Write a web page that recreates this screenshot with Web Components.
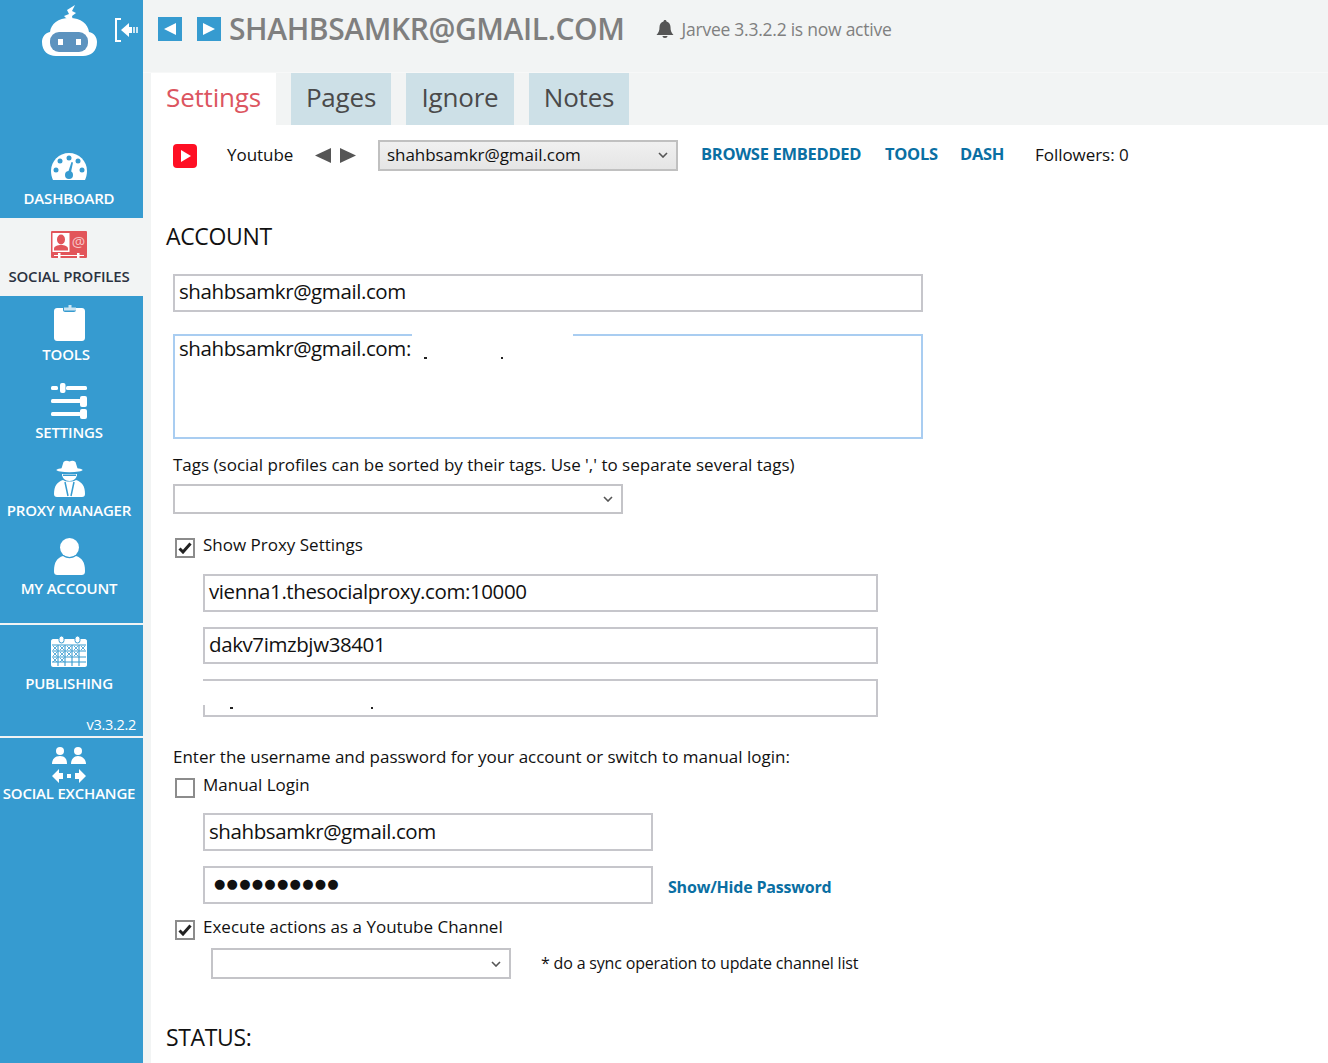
<!DOCTYPE html>
<html>
<head>
<meta charset="utf-8">
<title>Jarvee</title>
<style>
    html, body { margin: 0; height: 100%; overflow: hidden; }
    body { font-family: "Open Sans", "Liberation Sans", sans-serif; background: #f2f4f4; }
</style>
</head>
<body>
<jarvee-app>
    <side-bar slot="side">
        <nav-item label="DASHBOARD">
            <svg width="36" height="27" viewBox="0 0 36 27"><path fill="#fff" d="M18 0C8 0 0 8 0 18c0 3 .6 6 2 9h32c1.400-3 2-6 2-9C36 8 28 0 18 0z"/><g fill="#369bd0"><circle cx="18" cy="5" r="2.500"/><circle cx="9" cy="8" r="2.500"/><circle cx="27" cy="8" r="2.500"/><circle cx="5" cy="17" r="2.500"/><circle cx="31" cy="17" r="2.500"/><circle cx="18" cy="22" r="4"/><path d="M16.500 21l4-12 1.500.5-2.500 12z"/></g></svg>
        </nav-item>
        <nav-item label="SOCIAL PROFILES" active>
            <svg width="36" height="27" viewBox="0 0 36 27"><rect width="36" height="27" rx="1" fill="#e2555a"/><rect x="1.500" y="2" width="17" height="19" fill="#fff"/><ellipse cx="10" cy="8.500" rx="4" ry="5" fill="#e2555a"/><path fill="#e2555a" d="M3 19.500v-2c0-2 3.500-3.500 7-3.500s7 1.500 7 3.500v2z"/><text x="27.500" y="16" font-size="15" text-anchor="middle" fill="#f7c4c6" font-family="Open Sans">@</text><path fill="#fff" d="M3 24h30v1H3zM7 22h2.500v5H7zM26 22h2.500v5H26z"/></svg>
        </nav-item>
        <nav-item label="TOOLS" shift="-3px">
            <svg width="31" height="36" viewBox="0 0 31 36"><path fill="#fff" d="M3 3h6v2c0 1 1 2 2 2h9c1 0 2-1 2-2V3h6c1.500 0 3 1 3 3v27c0 2-1.500 3-3 3H3c-1.500 0-3-1-3-3V6c0-2 1.500-3 3-3z"/><path fill="#cde5f2" d="M10 5.500V2.500h4.500V0h3v2.500H22v3z"/></svg>
        </nav-item>
        <nav-item label="SETTINGS">
            <svg width="36" height="36" viewBox="0 0 36 36"><g fill="#fff"><rect x="0" y="3" width="7" height="4" rx="1.500"/><rect x="15" y="3" width="21" height="4" rx="1.500"/><rect x="9" y="0" width="5.500" height="10" rx="2"/><rect x="0" y="16" width="30" height="4" rx="1.500"/><rect x="29" y="13" width="7" height="11" rx="2"/><rect x="0" y="29" width="30" height="4" rx="1.500"/><rect x="29" y="26" width="7" height="10" rx="2"/></g></svg>
        </nav-item>
        <nav-item label="PROXY MANAGER">
            <svg width="31" height="37" viewBox="0 0 31 37"><path fill="#fff" d="M7 10L9.500 2Q12 0 15.500 1.500 19 0 21.500 2L24 10z"/><ellipse cx="15.500" cy="10" rx="13" ry="2.200" fill="#fff"/><path fill="#fff" d="M8 14h15c0 4-3 7-7.500 7S8 18 8 14z"/><path fill="#369bd0" d="M9 14.500h13v1.500H9z"/><path fill="#fff" d="M0 34c0-8 3-12 9-14 3 2 10 2 13 0 6 2 9 6 9 14 0 2-1 3-3 3H3c-2 0-3-1-3-3z"/><path fill="none" stroke="#369bd0" stroke-width="1.500" d="M11 22l3 14M20 22l-3 14"/></svg>
        </nav-item>
        <nav-item label="MY ACCOUNT">
            <svg width="31" height="37" viewBox="0 0 31 37"><circle cx="15.500" cy="9.500" r="9.500" fill="#fff"/><path fill="#fff" d="M0 33c0-9 3-13 9-15 4 3 9 3 13 0 6 2 9 6 9 15 0 3-1 4-4 4H4c-3 0-4-1-4-4z"/></svg>
        </nav-item>
        <side-rule style="margin-top:15px"></side-rule>
        <nav-item label="PUBLISHING">
            <svg width="36" height="31" viewBox="0 0 36 31"><path fill="#fff" d="M2 3h32c1 0 2 1 2 2v24c0 1-1 2-2 2H2c-1 0-2-1-2-2V5c0-1 1-2 2-2z"/><g fill="#fff" stroke="#369bd0"><rect x="8" y="0" width="5" height="7" rx="2.500"/><rect x="24" y="0" width="5" height="7" rx="2.500"/></g><g stroke="#369bd0" stroke-width="1.100"><path d="M1 9h34M1 15h34M1 21h34M1 26h34M7 9v21M14 9v21M21 9v21M28 9v21"/><path stroke-width=".8" d="M2 10l4 4M6 10l-4 4M9 10l4 4M13 10l-4 4M16 10l4 4M20 10l-4 4M23 10l4 4M27 10l-4 4M30 10l4 4M34 10l-4 4M2 16l4 4M6 16l-4 4M9 16l4 4M13 16l-4 4M16 16l4 4M20 16l-4 4M23 16l4 4M27 16l-4 4M2 22l4 4M6 22l-4 4M9 22l4 4M13 22l-4 4"/></g></svg>
        </nav-item>
        <side-version>v3.3.2.2</side-version>
        <side-rule></side-rule>
        <nav-item label="SOCIAL EXCHANGE" lift="-4px">
            <svg width="34" height="36" viewBox="0 0 34 36"><g fill="#fff"><circle cx="8" cy="4" r="4"/><path d="M0 17c0-5 3-8 8-8s7 3 7 8z"/><circle cx="26" cy="4" r="4"/><path d="M19 17c0-5 3-8 7-8s8 3 8 8z"/><path d="M0 29l7-7v4h4v6H7v4zM34 29l-7-7v4h-4v6h4v4z"/><rect x="15" y="27" width="4" height="4"/></g></svg>
        </nav-item>
    </side-bar>

    <top-bar slot="top" title="SHAHBSAMKR@GMAIL.COM" notice="Jarvee 3.3.2.2 is now active"></top-bar>
    <tab-strip slot="top">
        <tab-item active style="width:125px">Settings</tab-item>
        <tab-item style="width:100px">Pages</tab-item>
        <tab-item style="width:108px">Ignore</tab-item>
        <tab-item style="width:100px">Notes</tab-item>
    </tab-strip>

    <account-toolbar style="margin-top:15px"></account-toolbar>

    <section-title style="margin-top:50px">ACCOUNT</section-title>
    <text-field w="750" style="margin-top:21px">shahbsamkr@gmail.com</text-field>
    <text-field w="750" h="105" focus style="margin-top:22px;line-height:25px">shahbsamkr@gmail.com:
        <patch-mark slot="over" style="left:237px;top:-2px;width:161px;height:28px"></patch-mark>
        <patch-mark slot="over" ink style="left:249px;top:21px;width:3px;height:2px"></patch-mark>
        <patch-mark slot="over" ink style="left:326px;top:21px;width:2px;height:2px"></patch-mark>
    </text-field>
    <form-label style="margin-top:14px">Tags (social profiles can be sorted by their tags. Use ',' to separate several tags)</form-label>
    <select-field w="450" h="30" style="margin-top:7px"></select-field>
    <check-row checked style="margin-top:20px">Show Proxy Settings</check-row>
    <text-field w="675" indent style="margin-top:16px">vienna1.thesocialproxy.com:10000</text-field>
    <text-field w="675" h="37" indent style="margin-top:15px">dakv7imzbjw38401</text-field>
    <text-field w="675" indent style="margin-top:15px">
        <patch-mark slot="over" style="left:-2px;top:0;width:4px;height:24px"></patch-mark>
        <patch-mark slot="over" ink style="left:25px;top:26px;width:3px;height:2px"></patch-mark>
        <patch-mark slot="over" ink style="left:166px;top:26px;width:2px;height:2px"></patch-mark>
    </text-field>
    <form-label style="margin-top:28px">Enter the username and password for your account or switch to manual login:</form-label>
    <check-row style="margin-top:5px">Manual Login</check-row>
    <text-field w="450" indent style="margin-top:15px;line-height:32px">shahbsamkr@gmail.com</text-field>
    <password-row style="margin-top:15px"></password-row>
    <check-row checked style="margin-top:12px">Execute actions as a Youtube Channel</check-row>
    <channel-row style="margin-top:8px"></channel-row>
    <section-title style="margin-top:43px">STATUS:</section-title>
</jarvee-app>

<script>
function make(name, html, setup) {
    customElements.define(name, class extends HTMLElement {
        constructor() {
            super();
            this.attachShadow({ mode: 'open' }).innerHTML = html;
        }
        connectedCallback() {
            if (setup) setup(this, this.shadowRoot);
        }
    });
}

const chevron = '<svg width="10" height="6" viewBox="0 0 10 6"><path d="M1 1l4 4 4-4" fill="none" stroke="#555" stroke-width="1.600"/></svg>';

make('jarvee-app', `
    <style>
        :host { display: flex; height: 1063px; overflow: hidden; color: #111; }
        .main { flex: 1; min-width: 0; display: flex; flex-direction: column; }
        .top { display: block; }
        .page { flex: 1; background: #fff; margin-left: 8px; padding-left: 22px; min-height: 0; }
    </style>
    <slot name="side"></slot>
    <div class="main">
        <div class="top"><slot name="top"></slot></div>
        <div class="page"><slot></slot></div>
    </div>
`);

make('side-bar', `
    <style>
        :host { display: block; width: 143px; flex: none; background: #369bd0; }
        .head { height: 140px; display: flex; align-items: flex-start; }
        .logo { margin: 5px 0 0 42px; }
        .back { margin: 18px 0 0 17px; }
    </style>
    <div class="head">
        <svg class="logo" width="55" height="51" viewBox="0 0 55 51">
            <path fill="#fff" d="M27 16l-5-5 5-2-2-4 8-5-3 6 4 2-4 3 1 5z"/>
            <path fill="#fff" d="M27.500 13C39 13 46 19 47 27c5 1 8 5 8 10 0 9-6 14-14 14H14C6 51 0 46 0 37c0-5 3-9 8-10 1-8 8-14 19.500-14z"/>
            <rect x="8" y="27" width="38" height="20" rx="9" fill="#5d93bf"/>
            <rect x="16" y="34" width="5" height="6" fill="#fff"/>
            <rect x="34" y="34" width="5" height="6" fill="#fff"/>
        </svg>
        <svg class="back" width="25" height="24" viewBox="0 0 25 24">
            <path fill="none" stroke="#fff" stroke-width="2" d="M7 1H2v22h5"/>
            <path fill="#fff" d="M7 12l8-7v4h3v6h-3v4z"/>
            <path fill="#cfe6f3" d="M19 9h2v6h-2zM22 9h2v6h-2z"/>
        </svg>
    </div>
    <slot></slot>
`);

make('nav-item', `
    <style>
        :host { display: block; height: 78px; color: #fff; padding-right: 5px; }
        :host([active]) { background: #f2f4f4; color: #2b3240; }
        .icon { box-sizing: border-box; height: 49px; padding-top: 4px; display: flex; align-items: center; justify-content: center; }
        .label { margin-top: -1px; font-size: 15px; font-weight: 600; line-height: 20px; text-align: center; white-space: nowrap; letter-spacing: -.2px; }
    </style>
    <div class="icon"><slot></slot></div>
    <div class="label"></div>
`, (el, root) => {
    const label = root.querySelector('.label');
    label.textContent = el.getAttribute('label');
    if (el.hasAttribute('shift')) label.style.transform = `translateX(${el.getAttribute('shift')})`;
    if (el.hasAttribute('lift')) label.style.marginTop = el.getAttribute('lift');
});

make('side-rule', `
    <style>:host { display: block; height: 2px; background: #f2f4f4; }</style>
`);

make('side-version', `
    <style>
        :host { display: block; height: 33px; box-sizing: border-box; padding: 13px 7px 0 0; color: #fff; font-size: 14.500px; line-height: 18px; text-align: right; letter-spacing: -.3px; }
    </style>
    <slot></slot>
`);

make('top-bar', `
    <style>
        :host { display: flex; align-items: center; border-bottom: 1px solid #f7f8f8; padding-left: 15px; padding-bottom: 14px; box-sizing: border-box; height: 73px; }
        .nav { width: 24px; height: 24px; background: #369bd0; display: flex; align-items: center; justify-content: center; flex: none; }
        .prev { margin-right: 15px; }
        .next { margin-right: 8px; }
        h1 { margin: 0; font-size: 30px; font-weight: 600; color: #7f7f7f; letter-spacing: -.4px; white-space: nowrap; line-height: 36px; }
        .bell { margin-left: 31px; }
        .note { margin-left: 8px; font-size: 17.500px; color: #808080; letter-spacing: -.25px; white-space: nowrap; }
    </style>
    <div class="nav prev"><svg width="14" height="14" viewBox="0 0 14 14"><path fill="#fff" d="M13 1v12L1 7z"/></svg></div>
    <div class="nav next"><svg width="14" height="14" viewBox="0 0 14 14"><path fill="#fff" d="M1 1v12l12-6z"/></svg></div>
    <h1></h1>
    <svg class="bell" width="18" height="18" viewBox="0 0 18 18"><path fill="#555" d="M9 0c1 0 1.500.6 1.500 1.500C13 2 14.500 4.500 14.500 7c0 4 .8 5.500 3 8H.5c2.200-2.500 3-4 3-8 0-2.500 1.500-5 4-5.500C7.500.6 8 0 9 0zM6.500 16h5c0 1.200-1 2-2.500 2s-2.500-.8-2.500-2z"/></svg>
    <span class="note"></span>
`, (el, root) => {
    root.querySelector('h1').textContent = el.getAttribute('title');
    root.querySelector('.note').textContent = el.getAttribute('notice');
    el.removeAttribute('title');
});

make('tab-strip', `
    <style>
        :host { display: flex; gap: 15px; height: 52px; margin-left: 8px; }
    </style>
    <slot></slot>
`);

make('tab-item', `
    <style>
        :host { display: flex; align-items: center; justify-content: center; background: #cde0e7; color: #4a4a4a; font-size: 26px; letter-spacing: -.2px; box-sizing: border-box; padding-bottom: 4px; }
        :host([active]) { background: #fff; color: #dc5560; }
    </style>
    <slot></slot>
`);

make('account-toolbar', `
    <style>
        :host { display: flex; align-items: center; height: 31px; font-size: 17px; letter-spacing: -.05px; white-space: nowrap; color: #111; }
        .yt { width: 54px; flex: none; display: flex; }
        .name { width: 88px; flex: none; padding-bottom: 2px; }
        .arrows { width: 63px; flex: none; display: flex; gap: 9px; }
        .pick { width: 300px; height: 31px; flex: none; box-sizing: border-box; border: 2px solid #c0c0c0; background: linear-gradient(#f0f0f0, #e5e5e5); display: flex; align-items: center; justify-content: space-between; padding: 0 8px 2px 7px; }
        a { color: #0a6fa3; font-weight: 700; font-size: 16.500px; letter-spacing: -.3px; flex: none; padding-bottom: 5px; }
        .b1 { margin-left: 23px; width: 184px; }
        .b2 { width: 75px; }
        .b3 { width: 75px; }
        .foll { padding-bottom: 2px; }
    </style>
    <div class="yt"><svg width="24" height="24" viewBox="0 0 24 24"><rect width="24" height="24" rx="4" fill="#fe0f24"/><path fill="#fff" d="M8 6l10 6-10 6z"/></svg></div>
    <span class="name">Youtube</span>
    <div class="arrows">
        <svg width="16" height="15" viewBox="0 0 16 15"><path fill="#555" d="M16 0v15L0 7.500z"/></svg>
        <svg width="16" height="15" viewBox="0 0 16 15"><path fill="#555" d="M0 0v15l16-7.500z"/></svg>
    </div>
    <div class="pick"><span>shahbsamkr@gmail.com</span>${chevron}</div>
    <a class="b1">BROWSE EMBEDDED</a>
    <a class="b2">TOOLS</a>
    <a class="b3">DASH</a>
    <span class="foll">Followers: 0</span>
`);

make('section-title', `
    <style>
        :host { display: block; margin-left: -7px; font-size: 23px; line-height: 30px; height: 32px; letter-spacing: -.35px; color: #111; }
    </style>
    <slot></slot>
`);

make('form-label', `
    <style>
        :host { display: block; font-size: 17px; line-height: 24px; height: 24px; color: #111; white-space: nowrap; }
    </style>
    <slot></slot>
`);

make('text-field', `
    <style>
        :host { display: block; box-sizing: border-box; position: relative; height: 38px; border: 2px solid #c6c6cb; background: #fff; padding: 0 4px; font-size: 20.500px; line-height: 30px; letter-spacing: -.4px; color: #111; white-space: nowrap; }
        :host([indent]) { margin-left: 30px; }
        :host([focus]) { border-color: #a9cdf1; }
    </style>
    <slot></slot><slot name="over"></slot>
`, el => {
    el.style.width = el.getAttribute('w') + 'px';
    if (el.hasAttribute('h')) el.style.height = el.getAttribute('h') + 'px';
});

make('patch-mark', `
    <style>
        :host { display: block; position: absolute; background: #fff; }
        :host([ink]) { background: #222; }
    </style>
`);

make('select-field', `
    <style>
        :host { display: flex; align-items: center; justify-content: flex-end; box-sizing: border-box; border: 2px solid #c4c4c8; padding-right: 8px; background: #fff; }
    </style>
    ${chevron}
`, el => {
    el.style.width = el.getAttribute('w') + 'px';
    el.style.height = el.getAttribute('h') + 'px';
});

make('check-row', `
    <style>
        :host { display: flex; height: 24px; font-size: 17px; line-height: 22px; color: #111; white-space: nowrap; }
        .box { width: 20px; height: 20px; box-sizing: border-box; border: 2px solid #8c8c8c; margin: 4px 8px 0 2px; flex: none; background: #fff; display: flex; align-items: center; justify-content: center; }
        .box svg { display: none; }
        :host([checked]) .box svg { display: block; }
    </style>
    <div class="box"><svg width="14" height="12" viewBox="0 0 14 12"><path d="M1.500 6.500l3.500 3.500 7.500-8.500" fill="none" stroke="#222" stroke-width="3"/></svg></div>
    <slot></slot>
`);

make('password-row', `
    <style>
        :host { display: flex; align-items: center; margin-left: 30px; }
        a { margin: 4px 0 0 15px; color: #0a6fa3; font-size: 16px; font-weight: 700; letter-spacing: -.2px; white-space: nowrap; }
        .dots { font-family: "DejaVu Sans", sans-serif; font-size: 13px; letter-spacing: 1.250px; padding-left: 5px; line-height: 31px; display: block; }
    </style>
    <text-field w="450"><span class="dots">●●●●●●●●●●</span></text-field>
    <a>Show/Hide Password</a>
`);

make('channel-row', `
    <style>
        :host { display: flex; align-items: center; margin-left: 38px; }
        span { margin-left: 30px; padding-bottom: 2px; font-size: 16px; letter-spacing: -.18px; color: #111; white-space: nowrap; }
    </style>
    <select-field w="300" h="31"></select-field>
    <span>* do a sync operation to update channel list</span>
`);
</script>
</body>
</html>
